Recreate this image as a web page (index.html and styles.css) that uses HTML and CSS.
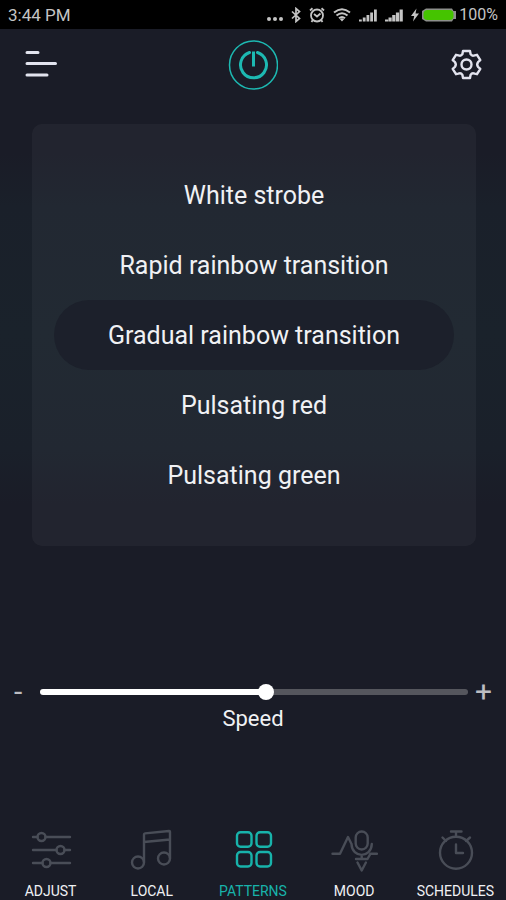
FILE: index.html
```html
<!DOCTYPE html>
<html lang="en">
  <head>
    <meta charset="UTF-8" />
    <meta name="viewport" content="width=device-width, initial-scale=1.0" />
    <title>Patterns</title>
    <link rel="stylesheet" href="styles.css">
  </head>
  <body>
    <div class="status-bar">
      <span class="time">3:44 PM</span>
      <div class="status-icons">
        <svg width="16" height="16" viewBox="0 0 16 16" fill="currentColor">
          <circle cx="2" cy="12" r="2" />
          <circle cx="8" cy="12" r="2" />
          <circle cx="14" cy="12" r="2" />
        </svg>
        <svg width="10" height="16" viewBox="0 0 10 16" fill="none" stroke="currentColor" stroke-width="1.7">
          <path d="M1 4.5l7.500 7L5 14.500v-13l3.500 3-7.500 7" />
        </svg>
        <svg width="16" height="16" viewBox="0 0 16 16" fill="none" stroke="currentColor" stroke-width="1.8">
          <circle cx="8" cy="8.500" r="6" />
          <path d="M5 7l3 2.500L11.500 6.500M1 3.500L3.500 1.300M15 3.500L12.500 1.300M3.800 13L2.500 15M12.200 13l1.300 2" />
        </svg>
        <svg width="18" height="16" viewBox="0 0 18 16" fill="none" stroke="currentColor" stroke-width="2">
          <path d="M1 5.500q8-6.500 16 0M3.500 8.500q5.500-4.500 11 0M6 11.200q3-2.500 6 0" />
          <path d="M6.800 12l2.200 2.500 2.200-2.500q-2.200-1.500-4.400 0z" fill="currentColor" stroke="none" />
        </svg>
        <svg width="18" height="16" viewBox="0 0 18 16" fill="currentColor">
          <path d="M0 12.500h2.800v2H0zM3.800 10.500h2.800v4H3.800zM7.500 8h2.800v6.500H7.500zM11.200 5.500h2.800v9h-2.800zM15 2.500h2.800v12H15z" />
        </svg>
        <svg width="18" height="16" viewBox="0 0 18 16" fill="currentColor">
          <path d="M0 12.500h3.200v2H0zM3.500 10.500h3.200v4h-3.200zM7.200 8h3.200v6.500h-3.200zM10.900 5.500h3.200v9h-3.200zM14.600 2.500h3.200v12h-3.200z" />
        </svg>
        <div class="battery">
          <svg width="8" height="16" viewBox="0 0 8 16" fill="currentColor">
            <path d="M5.500 1.500L0 9h3.200L2 14.500l6-8H4.500z" />
          </svg>
          <svg width="34" height="16" viewBox="0 0 34 16">
            <path d="M4 1.500h26l1.500 2.500H34v8h-2.500L30 14.500H4L0 12V4z" fill="#8d8f8c" />
            <rect x="1.500" y="3" width="30" height="10" rx="4" fill="#45c400" />
          </svg>
          <span>100%</span>
        </div>
      </div>
    </div>

    <header class="top-bar">
      <button class="icon-button" aria-label="Menu">
        <svg width="34" height="32" viewBox="0 0 34 32" fill="none" stroke="currentColor" stroke-width="3" stroke-linecap="round">
          <path d="M3 3.500h11M3 14.500h28.500M3 26h20" />
        </svg>
      </button>
      <button class="icon-button power" aria-label="Power">
        <svg width="50" height="50" viewBox="0 0 50 50" fill="none" stroke="currentColor" stroke-linecap="round">
          <circle cx="25.500" cy="25" r="24" stroke-width="1.500" />
          <path d="M21.500 12.500A13 13 0 1 0 29.500 12.500" stroke-width="3" />
          <path d="M25.500 11.500v15" stroke-width="3" stroke-linecap="butt" />
        </svg>
      </button>
      <button class="icon-button settings" aria-label="Settings">
        <svg width="32" height="32" viewBox="0 0 32 32" fill="none" stroke="currentColor" stroke-width="2.400" stroke-linejoin="round">
          <path d="M13 2h7l.600 3.200q1.400 2.300 4 1.200l2.400-.600 3.300 5.400-2.300 2q-1.600 2.300 0 4.600l2.300 2-3.300 5.400-2.400-.600q-2.600-1.100-4 1.200L20 29h-7l-.600-3.200q-1.400-2.300-4-1.200L6 25.200l-3.300-5.400 2.300-2q1.600-2.300 0-4.600l-2.300-2L6 5.800l2.400.600q2.600 1.100 4-1.200z" />
          <circle cx="16.500" cy="15.500" r="5" />
        </svg>
      </button>
    </header>

    <main>
      <div class="pattern-list">
        <button class="pattern">White strobe</button>
        <button class="pattern">Rapid rainbow transition</button>
        <button class="pattern selected">Gradual rainbow transition</button>
        <button class="pattern">Pulsating red</button>
        <button class="pattern">Pulsating green</button>
      </div>

      <div class="speed">
        <div class="speed-row">
          <span class="sign">-</span>
          <input type="range" id="speed" min="0" max="100" value="53" style="--value: 53%" />
          <span class="sign">+</span>
        </div>
        <label for="speed">Speed</label>
      </div>
    </main>

    <nav class="tabs">
      <a href="#adjust" class="tab">
        <svg width="48" height="44" viewBox="0 0 48 44">
          <path d="M6 9h4.500M18.500 9H43M6 22h23.500M37.500 22H43M6 35h9.500M23.500 35H43" />
          <circle cx="14.500" cy="9" r="4" />
          <circle cx="33.500" cy="22" r="4" />
          <circle cx="19.500" cy="35" r="4" />
        </svg>
        <span>ADJUST</span>
      </a>
      <a href="#local" class="tab">
        <svg width="48" height="44" viewBox="0 0 48 44">
          <circle cx="10" cy="34.500" r="6" />
          <circle cx="36" cy="30.500" r="6" />
          <path d="M16 34V6.500q0-1 1-1.100L41 3q1-.1 1 1v26M16 14l26-2.500" />
        </svg>
        <span>LOCAL</span>
      </a>
      <a href="#patterns" class="tab active">
        <svg width="48" height="44" viewBox="0 0 48 44">
          <rect x="8" y="4.300" width="14.500" height="14.500" rx="3.500" />
          <rect x="27.500" y="4.300" width="14.500" height="14.500" rx="3.500" />
          <rect x="8" y="24" width="14.500" height="14.500" rx="3.500" />
          <rect x="27.500" y="24" width="14.500" height="14.500" rx="3.500" />
        </svg>
        <span>PATTERNS</span>
      </a>
      <a href="#mood" class="tab">
        <svg width="48" height="44" viewBox="0 0 48 44">
          <path d="M2.500 25.700H10L18 9l3 6" />
          <rect x="25.700" y="3.500" width="12" height="18" rx="6" />
          <path d="M21.500 16c.5 14.500 19.800 14.500 20.300 0M31.700 27v4M26 31h11.500l3-5.300H47" />
          <path d="M27.500 34.500l4.200 8 4.200-8" />
        </svg>
        <span>MOOD</span>
      </a>
      <a href="#schedules" class="tab">
        <svg width="48" height="44" viewBox="0 0 48 44">
          <circle cx="25" cy="24.700" r="16" />
          <path d="M20 3.500h10.500M25 3.500v5M11.500 9.500L15 13M39 9.500L35 13M25 16.500v8.500h7" />
        </svg>
        <span>SCHEDULES</span>
      </a>
    </nav>

    <script>
      const speed = document.getElementById("speed");

      speed.addEventListener("input", () => {
        speed.style.setProperty("--value", speed.value + "%");
      });
    </script>
  </body>
</html>
```
FILE: styles.css
```css
* {
  box-sizing: border-box;
}

body {
  margin: 0;
  min-height: 100vh;
  display: flex;
  flex-direction: column;
  background: linear-gradient(#1a1c27 17%, #1a202a 23%, #1a222b 37%, #1a202a 50%, #1a1c27 56%);
  color: #f0f1f4;
  font-family: Roboto, "Liberation Sans", sans-serif;
}

button {
  border: none;
  background: none;
  color: inherit;
  font: inherit;
  cursor: pointer;
}

svg {
  display: block;
}

.status-bar {
  display: flex;
  justify-content: space-between;
  align-items: center;
  height: 29px;
  padding: 0 8px;
  background: #000;
  color: #c4c4c4;
  font-size: 16px;
}

.time {
  font-size: 17px;
}

.status-icons {
  display: flex;
  align-items: center;
  gap: 8px;
}

.battery {
  display: flex;
  align-items: center;
  gap: 3px;
}

.top-bar {
  display: grid;
  grid-template-columns: 1fr auto 1fr;
  align-items: center;
  padding: 11px 24px 0;
}

.icon-button {
  padding: 0;
  justify-self: start;
  color: #e2e3ee;
}

.icon-button.power {
  color: #1db9b2;
}

.icon-button.settings {
  justify-self: end;
}

.pattern-list {
  display: flex;
  flex-direction: column;
  margin: 34px 30px 0 32px;
  padding: 36px 22px;
  border-radius: 10px;
  background: rgba(255, 255, 255, 0.04);
}

.pattern {
  height: 70px;
  padding: 0;
  border-radius: 35px;
  font-size: 25px;
}

.pattern.selected {
  background: #1c202b;
}

.speed {
  margin-top: 130px;
  text-align: center;
  font-size: 22px;
}

.speed-row {
  display: flex;
  align-items: center;
  padding: 0 14px;
}

.speed-row input {
  flex: 1;
  min-width: 0;
  height: 16px;
  margin: 0 7px 0 18px;
  appearance: none;
  background: none;
}

.speed-row input::-webkit-slider-runnable-track {
  height: 6px;
  border-radius: 3px;
  background: linear-gradient(to right, #fff var(--value), #55565d var(--value));
}

.speed-row input::-webkit-slider-thumb {
  appearance: none;
  width: 16px;
  height: 16px;
  margin-top: -5px;
  border-radius: 50%;
  background: #fff;
}

.sign {
  color: #bcbdc2;
  font-size: 30px;
  line-height: 32px;
}

.speed label {
  display: block;
  line-height: 22px;
}

.tabs {
  display: grid;
  grid-template-columns: repeat(5, 1fr);
  margin-top: auto;
}

.tab {
  display: flex;
  flex-direction: column;
  align-items: center;
  gap: 10px;
  color: #f0f1f4;
  font-size: 14px;
  line-height: 18px;
  text-decoration: none;
}

.tab svg {
  fill: none;
  stroke: #494d57;
  stroke-width: 2.4px;
  stroke-linecap: round;
  stroke-linejoin: round;
}

.tab.active {
  color: #18b3ab;
}

.tab.active svg {
  stroke: #18b3ab;
}
```
